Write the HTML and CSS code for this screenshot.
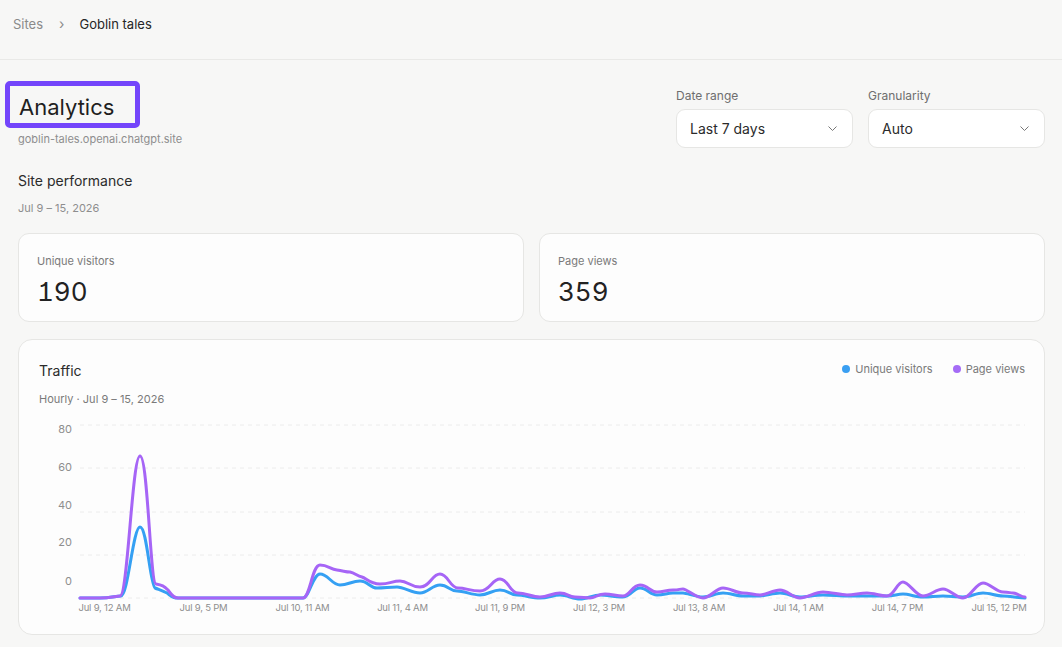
FILE: index.html
```html
<!DOCTYPE html>
<html lang="en">
<head>
    <meta charset="UTF-8">
    <meta name="viewport" content="width=device-width, initial-scale=1.0">
    <title>Analytics | Goblin tales</title>
    <link rel="stylesheet" href="styles.css">
</head>
<body>
    <header class="topbar">
        <nav class="crumbs">
            <span class="crumb-muted">Sites</span>
            <span class="crumb-sep">›</span>
            <span class="crumb-current">Goblin tales</span>
        </nav>
    </header>

    <main class="page">
        <div class="page-head">
            <div class="title-block">
                <h1 class="title">Analytics</h1>
                <div class="site-url">goblin-tales.openai.chatgpt.site</div>
            </div>
            <div class="filters">
                <div class="filter">
                    <label class="filter-label">Date range</label>
                    <div class="select">
                        <span>Last 7 days</span>
                        <svg width="9" height="5" viewBox="0 0 9 5"><path d="M0.5 0.5 L4.5 4.5 L8.5 0.5" fill="none" stroke="#777" stroke-width="1"/></svg>
                    </div>
                </div>
                <div class="filter">
                    <label class="filter-label">Granularity</label>
                    <div class="select">
                        <span>Auto</span>
                        <svg width="9" height="5" viewBox="0 0 9 5"><path d="M0.5 0.5 L4.5 4.5 L8.5 0.5" fill="none" stroke="#777" stroke-width="1"/></svg>
                    </div>
                </div>
            </div>
        </div>

        <h2 class="section-title">Site performance</h2>
        <div class="section-sub">Jul 9 – 15, 2026</div>

        <div class="stats">
            <div class="stat-card">
                <div class="stat-label">Unique visitors</div>
                <div class="stat-value">190</div>
            </div>
            <div class="stat-card">
                <div class="stat-label">Page views</div>
                <div class="stat-value">359</div>
            </div>
        </div>

        <section class="chart-card">
            <div class="chart-head">
                <h3 class="chart-title">Traffic</h3>
                <div class="legend">
                    <span class="legend-item"><i class="dot dot-blue"></i>Unique visitors</span>
                    <span class="legend-item"><i class="dot dot-purple"></i>Page views</span>
                </div>
            </div>
            <div class="chart-sub">Hourly · Jul 9 – 15, 2026</div>

            <svg class="chart" width="986" height="200" viewBox="39 415 986 200">
                <g class="grid">
                    <line x1="80" y1="425" x2="1025" y2="425"/>
                    <line x1="80" y1="468" x2="1025" y2="468"/>
                    <line x1="80" y1="512" x2="1025" y2="512"/>
                    <line x1="80" y1="555" x2="1025" y2="555"/>
                    <line x1="80" y1="598" x2="1025" y2="598"/>
                </g>
                <g class="y-labels">
                    <text x="72" y="430">80</text>
                    <text x="72" y="468">60</text>
                    <text x="72" y="506">40</text>
                    <text x="72" y="543">20</text>
                    <text x="72" y="582">0</text>
                </g>
                <g class="x-labels">
                    <text x="104.5" y="608">Jul 9, 12 AM</text>
                    <text x="203.5" y="608">Jul 9, 5 PM</text>
                    <text x="302.5" y="608">Jul 10, 11 AM</text>
                    <text x="402.5" y="608">Jul 11, 4 AM</text>
                    <text x="500" y="608">Jul 11, 9 PM</text>
                    <text x="599" y="608">Jul 12, 3 PM</text>
                    <text x="699" y="608">Jul 13, 8 AM</text>
                    <text x="798.5" y="608">Jul 14, 1 AM</text>
                    <text x="897.5" y="608">Jul 14, 7 PM</text>
                    <text x="999" y="608">Jul 15, 12 PM</text>
                </g>

                <path class="line line-blue" d="M80,598 L100,598 C110,598 116,596 121,596
                    C128,596 133,527 140,527 C147,527 150,585 155,588
                    C160,590 163,591 167,593 C170,595 172,598 178,598 L303,598
                    C309,598 313,574 320,574 C328,574 332,585 340,585
                    S352,581 360,581 S370,588 377,588 S390,587 397,587
                    S412,593 420,593 S432,585 440,585 S450,591 457,591
                    S472,595 480,595 S492,590 500,590 S510,595 517,595
                    S532,598 540,598 S553,595 560,595 S573,599 580,599
                    S593,595 600,595 S615,597 623,597 S633,588 640,588
                    S650,595 657,595 S667,593 673,593 S679,593 683,593
                    S696,597 703,597 S716,593 723,593 S736,596 743,596
                    S754,596 760,596 S773,593 780,593 S793,597 800,597
                    S815,595 823,595 S840,596 847,596 S860,596 867,596
                    S880,596 887,596 S897,594 903,594 S916,597 923,597
                    S936,596 943,596 S956,597 963,597 S976,593 983,593
                    S996,596 1003,596 S1018,598 1025,598"/>

                <path class="line line-purple" d="M80,598 L100,598 C110,598 116,596 120,596
                    C128,596 132,456 140,456 C148,456 150,583 156,584
                    C162,585 164,586 168,590 C171,594 173,598 178,598 L303,598
                    C310,598 312,565 320,565 C328,565 330,569 337,570
                    C344,571 346,572 350,572 C355,573 357,576 362,577
                    C366,578 370,584 380,584 S392,581 400,581 S410,587 420,587
                    S432,574 440,574 S450,588 458,588 S470,591 480,591
                    S492,579 500,579 S510,593 518,593 S532,597 540,597
                    S552,593 560,593 S568,597 575,597 S585,598 590,598
                    S598,594 605,594 S616,596 623,596 S632,585 640,585
                    S650,592 657,592 S666,590 673,590 S679,589 683,589
                    S696,598 703,598 S716,588 723,588 S736,593 743,593
                    S754,595 760,595 S773,590 780,590 S793,598 800,598
                    S815,592 823,592 S840,595 847,595 S860,593 867,593
                    S880,596 887,596 S897,582 903,582 S916,596 923,596
                    S936,589 943,589 S956,598 963,598 S976,583 983,583
                    S996,592 1003,592 S1009,593 1013,593 S1021,597 1025,597"/>
            </svg>
        </section>
    </main>
</body>
</html>
```

FILE: styles.css
```css
* {
    margin: 0;
    padding: 0;
    box-sizing: border-box;
}

body {
    background: #f7f7f6;
    color: #2b2b2b;
    font-family: Inter, "Noto Sans", "Liberation Sans", sans-serif;
}

.topbar {
    height: 60px;
    border-bottom: 1px solid #e9e9e7;
    padding: 16px 13px 0;
}

.crumbs {
    display: flex;
    align-items: center;
    font-size: 13px;
    line-height: 16px;
}

.crumb-muted {
    color: #8a8a8a;
}

.crumb-sep {
    color: #8a8a8a;
    margin: 0 15px 0 16px;
    font-size: 14px;
}

.crumb-current {
    color: #262626;
}

.page {
    padding: 21px 17px 0 18px;
}

.page-head {
    display: flex;
    justify-content: space-between;
    align-items: flex-start;
}

.title {
    display: inline-block;
    font-size: 22px;
    font-weight: 400;
    line-height: 32px;
    padding: 5px 21px 0 9px;
    margin-left: -13px;
    border: 5px solid #7445fb;
    border-radius: 5px;
    color: #1f1f1f;
}

.site-url {
    margin-top: 3px;
    font-size: 11px;
    line-height: 16px;
    color: #8e8e8e;
}

.filters {
    display: flex;
    gap: 15px;
    margin-top: 7px;
}

.filter {
    width: 177px;
}

.filter-label {
    display: block;
    font-size: 12px;
    line-height: 16px;
    color: #6e6e6e;
    margin-bottom: 5px;
}

.select {
    height: 39px;
    background: #fff;
    border: 1px solid #e6e6e4;
    border-radius: 9px;
    display: flex;
    align-items: center;
    justify-content: space-between;
    padding: 0 15px 0 13px;
    font-size: 14px;
    color: #2b2b2b;
}

.section-title {
    margin-top: 23px;
    font-size: 14px;
    font-weight: 400;
    line-height: 20px;
}

.section-sub {
    margin-top: 9px;
    font-size: 11px;
    line-height: 16px;
    color: #8e8e8e;
}

.stats {
    display: grid;
    grid-template-columns: 1fr 1fr;
    gap: 15px;
    margin-top: 17px;
}

.stat-card {
    height: 89px;
    background: #fdfdfd;
    border: 1px solid #e6e6e4;
    border-radius: 11px;
    padding: 19px 18px 0;
}

.stat-label {
    font-size: 11px;
    line-height: 16px;
    color: #7a7a7a;
}

.stat-value {
    margin-top: 7px;
    font-size: 26px;
    line-height: 32px;
    color: #222;
    font-feature-settings: "tnum", "cv01";
}

.chart-card {
    margin-top: 17px;
    background: #fdfdfd;
    border: 1px solid #e6e6e4;
    border-radius: 14px;
    padding: 21px 19px 19px 20px;
}

.chart-head {
    display: flex;
    justify-content: space-between;
    align-items: center;
}

.chart-title {
    font-size: 14px;
    font-weight: 400;
    line-height: 20px;
}

.legend {
    display: flex;
    gap: 20px;
    font-size: 11px;
    color: #7a7a7a;
    margin-top: -4px;
}

.legend-item {
    display: flex;
    align-items: center;
    gap: 5px;
}

.dot {
    width: 8px;
    height: 8px;
    border-radius: 50%;
}

.dot-blue {
    background: #3a9ff2;
}

.dot-purple {
    background: #a56cf6;
}

.chart-sub {
    margin-top: 10px;
    font-size: 11px;
    line-height: 16px;
    color: #7a7a7a;
}

.chart {
    display: block;
    margin-top: 8px;
    overflow: visible;
}

.grid line {
    stroke: #ececec;
    stroke-width: 1;
    stroke-dasharray: 4 4;
}

.y-labels text {
    font-size: 11px;
    fill: #8e8e8e;
    text-anchor: end;
    dominant-baseline: middle;
}

.x-labels text {
    font-size: 9.5px;
    fill: #8e8e8e;
    text-anchor: middle;
    dominant-baseline: middle;
    letter-spacing: -0.2px;
}

.line {
    fill: none;
    stroke-width: 3;
    stroke-linejoin: round;
    stroke-linecap: round;
}

.line-blue {
    stroke: #35a0f3;
}

.line-purple {
    stroke: #a665f6;
}
```
